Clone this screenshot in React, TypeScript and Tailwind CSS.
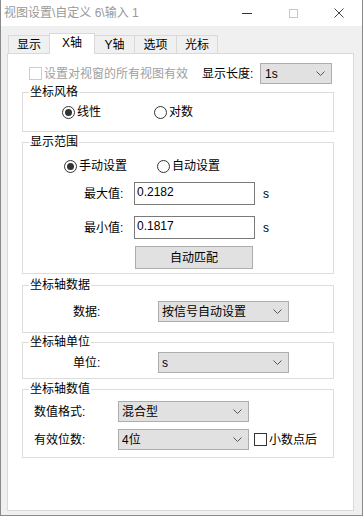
import React from "react";

function Chevron() {
  return (
    <svg width="9" height="5" viewBox="0 0 9 5" className="shrink-0">
      <path d="M0.5 0.5 L4.5 4.5 L8.5 0.5" stroke="#555" strokeWidth="1" fill="none" />
    </svg>
  );
}

function Radio({ checked, label }: { checked?: boolean; label: string }) {
  return (
    <div className="flex items-center h-[16px]">
      <div className="w-[13px] h-[13px] rounded-full border border-[#333] flex items-center justify-center bg-white">
        {checked && <div className="w-[7px] h-[7px] rounded-full bg-[#333]" />}
      </div>
      <span className="ml-[2px] text-[12px] leading-[16px] text-black">{label}</span>
    </div>
  );
}

function GroupLabel({ text }: { text: string }) {
  return (
    <span className="absolute left-[6px] -top-[9px] bg-white px-[1px] text-[12px] leading-[16px] text-black">
      {text}
    </span>
  );
}

export default function App() {
  return (
    <div className="w-[363px] h-[516px] bg-[#f0f0f0] border-l border-r border-b border-[#8a8a8a] flex flex-col font-['Liberation_Sans','Noto_Sans_CJK_SC',sans-serif] overflow-hidden">
      {/* Title bar */}
      <div className="h-[26px] bg-white flex items-center shrink-0">
        <span className="pl-[3px] text-[12px] leading-[16px] text-[#999]">视图设置\自定义 6\输入 1</span>
        <div className="ml-auto flex h-[26px]">
          <div className="w-[46px] h-[26px] flex items-center justify-center">
            <div className="w-[10px] h-[1px] bg-[#333]" />
          </div>
          <div className="w-[46px] h-[26px] flex items-center justify-center">
            <div className="w-[9px] h-[9px] border border-[#c8c8c8]" />
          </div>
          <div className="w-[46px] h-[26px] flex items-center justify-center">
            <svg width="10" height="10" viewBox="0 0 10 10">
              <path d="M0.5 0.5 L9.5 9.5 M9.5 0.5 L0.5 9.5" stroke="#444" strokeWidth="1" />
            </svg>
          </div>
        </div>
      </div>

      {/* Tab strip */}
      <div className="h-[27px] flex items-end pl-[7px] shrink-0">
        <div className="w-[42px] h-[18px] border-l border-t border-r border-[#d9d9d9] bg-[#f0f0f0] flex items-center justify-center text-[12px] leading-[16px] text-black">
          显示
        </div>
        <div className="-ml-px w-[46px] h-[21px] -mb-px relative z-10 bg-white border-l border-t border-r border-[#d9d9d9] flex items-start justify-center pt-[1px] text-[12px] leading-[16px] text-black">
          X轴
        </div>
        <div className="-ml-px w-[41px] h-[18px] border-l border-t border-r border-[#d9d9d9] bg-[#f0f0f0] flex items-center justify-center text-[12px] leading-[16px] text-black">
          Y轴
        </div>
        <div className="-ml-px w-[43px] h-[18px] border-l border-t border-r border-[#d9d9d9] bg-[#f0f0f0] flex items-center justify-center text-[12px] leading-[16px] text-black">
          选项
        </div>
        <div className="-ml-px w-[42px] h-[18px] border-l border-t border-r border-[#d9d9d9] bg-[#f0f0f0] flex items-center justify-center text-[12px] leading-[16px] text-black">
          光标
        </div>
      </div>

      {/* Panel */}
      <div className="ml-[6px] mr-[8px] h-[458px] shrink-0 border border-[#d9d9d9] bg-white flex flex-col pt-[9px]">
        {/* Row 1 */}
        <div className="flex items-center h-[21px]">
          <div className="ml-[21px] w-[13px] h-[13px] border border-[#cccccc] bg-white" />
          <span className="ml-[2px] w-[158px] text-[12px] leading-[16px] text-[#a0a0a0]">设置对视窗的所有视图有效</span>
          <span className="w-[58px] text-[12px] leading-[16px] text-black">显示长度:</span>
          <div className="w-[72px] h-[21px] border border-[#adadad] bg-[#e1e1e1] flex items-center justify-between pl-[4px] pr-[6px]">
            <span className="text-[12px] leading-[16px] text-black">1s</span>
            <Chevron />
          </div>
        </div>

        {/* 坐标风格 */}
        <div className="relative ml-[14px] mt-[8px] w-[312px] h-[40px] border border-[#dcdcdc] pt-[11px]">
          <GroupLabel text="坐标风格" />
          <div className="flex pl-[39px]">
            <div className="w-[92px]">
              <Radio checked label="线性" />
            </div>
            <Radio label="对数" />
          </div>
        </div>

        {/* 显示范围 */}
        <div className="relative ml-[14px] mt-[10px] w-[312px] h-[132px] border border-[#dcdcdc] pt-[15px]">
          <GroupLabel text="显示范围" />
          <div className="flex pl-[41px]">
            <div className="w-[93px]">
              <Radio checked label="手动设置" />
            </div>
            <Radio label="自动设置" />
          </div>
          <div className="flex items-center h-[23px] mt-[8px]">
            <span className="ml-[61px] w-[50px] text-[12px] leading-[16px] text-black">最大值:</span>
            <div className="w-[121px] h-[23px] border border-[#7a7a7a] bg-white pl-[2px] pt-[2px] text-[12px] leading-[14px] text-black">0.2182</div>
            <span className="ml-[8px] text-[12px] leading-[16px] text-black">s</span>
          </div>
          <div className="flex items-center h-[23px] mt-[11px]">
            <span className="ml-[61px] w-[50px] text-[12px] leading-[16px] text-black">最小值:</span>
            <div className="w-[121px] h-[23px] border border-[#7a7a7a] bg-white pl-[2px] pt-[2px] text-[12px] leading-[14px] text-black">0.1817</div>
            <span className="ml-[8px] text-[12px] leading-[16px] text-black">s</span>
          </div>
          <div className="mt-[7px] ml-[112px] w-[118px] h-[23px] border border-[#adadad] bg-[#e1e1e1] flex items-center justify-center text-[12px] leading-[16px] text-black">
            自动匹配
          </div>
        </div>

        {/* 坐标轴数据 */}
        <div className="relative ml-[14px] mt-[11px] w-[312px] h-[48px] border border-[#dcdcdc] pt-[15px]">
          <GroupLabel text="坐标轴数据" />
          <div className="flex items-center h-[21px]">
            <span className="ml-[50px] w-[85px] text-[12px] leading-[16px] text-black">数据:</span>
            <div className="w-[131px] h-[21px] border border-[#adadad] bg-[#e1e1e1] flex items-center justify-between pl-[3px] pr-[6px]">
              <span className="text-[12px] leading-[16px] text-black">按信号自动设置</span>
              <Chevron />
            </div>
          </div>
        </div>

        {/* 坐标轴单位 */}
        <div className="relative ml-[14px] mt-[9px] w-[312px] h-[37px] border border-[#dcdcdc] pt-[9px]">
          <GroupLabel text="坐标轴单位" />
          <div className="flex items-center h-[21px]">
            <span className="ml-[50px] w-[85px] text-[12px] leading-[16px] text-black">单位:</span>
            <div className="w-[131px] h-[21px] border border-[#adadad] bg-[#e1e1e1] flex items-center justify-between pl-[3px] pr-[6px]">
              <span className="text-[12px] leading-[16px] text-black">s</span>
              <Chevron />
            </div>
          </div>
        </div>

        {/* 坐标轴数值 */}
        <div className="relative ml-[14px] mt-[10px] w-[312px] h-[69px] border border-[#dcdcdc] pt-[11px]">
          <GroupLabel text="坐标轴数值" />
          <div className="flex items-center h-[21px]">
            <span className="ml-[11px] w-[84px] text-[12px] leading-[16px] text-black">数值格式:</span>
            <div className="w-[131px] h-[21px] border border-[#adadad] bg-[#e1e1e1] flex items-center justify-between pl-[3px] pr-[6px]">
              <span className="text-[12px] leading-[16px] text-black">混合型</span>
              <Chevron />
            </div>
          </div>
          <div className="flex items-center h-[21px] mt-[7px]">
            <span className="ml-[11px] w-[84px] text-[12px] leading-[16px] text-black">有效位数:</span>
            <div className="w-[131px] h-[21px] border border-[#adadad] bg-[#e1e1e1] flex items-center justify-between pl-[3px] pr-[6px]">
              <span className="text-[12px] leading-[16px] text-black">4位</span>
              <Chevron />
            </div>
            <div className="ml-[5px] w-[13px] h-[13px] border border-[#333] bg-white" />
            <span className="ml-[2px] text-[12px] leading-[16px] text-black">小数点后</span>
          </div>
        </div>
      </div>
    </div>
  );
}
